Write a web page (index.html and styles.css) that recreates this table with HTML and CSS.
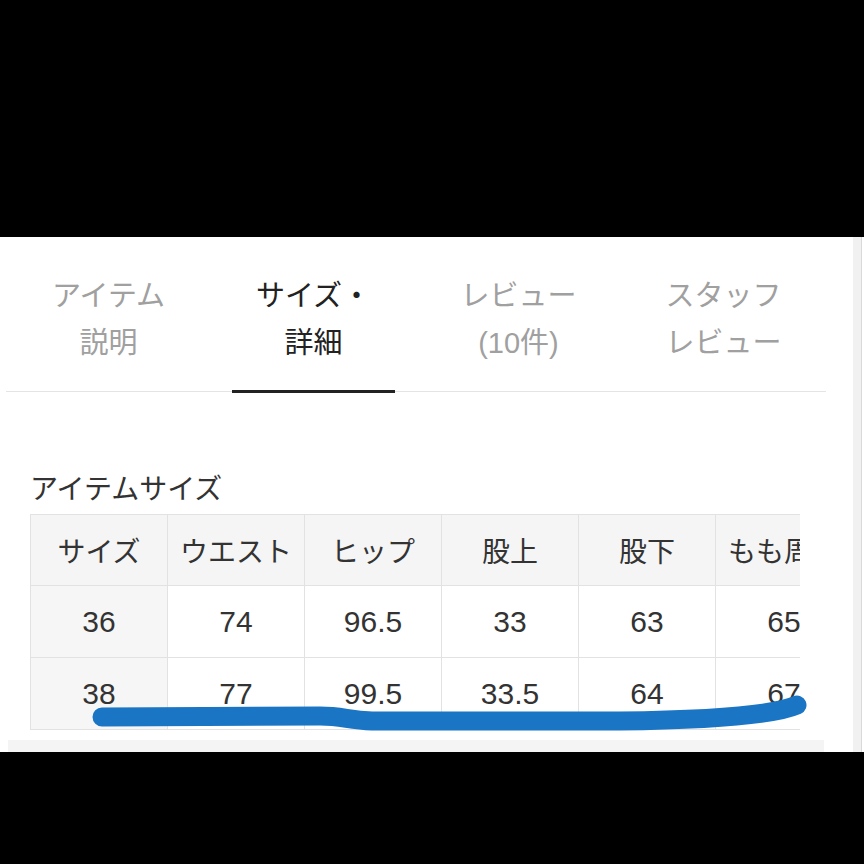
FILE: index.html
```html
<!DOCTYPE html>
<html lang="ja">
<head>
<meta charset="utf-8">
<title>サイズ・詳細</title>
<link rel="stylesheet" href="styles.css">
</head>
<body>
<div class="top-black"></div>
<main class="panel">
  <div class="panel-inner">
    <nav class="tabs">
      <div class="tab"><span>アイテム</span><span>説明</span></div>
      <div class="tab active"><span>サイズ・</span><span>詳細</span></div>
      <div class="tab"><span>レビュー</span><span>(10件)</span></div>
      <div class="tab"><span>スタッフ</span><span>レビュー</span></div>
    </nav>
    <section class="sizes">
      <h2 class="sizes-title">アイテムサイズ</h2>
      <div class="table-scroll">
        <table class="size-table">
          <tr class="head">
            <td>サイズ</td><td>ウエスト</td><td>ヒップ</td><td>股上</td><td>股下</td><td>もも周り</td>
          </tr>
          <tr class="row">
            <td class="first">36</td><td>74</td><td>96.5</td><td>33</td><td>63</td><td>65</td>
          </tr>
          <tr class="row">
            <td class="first">38</td><td>77</td><td>99.5</td><td>33.5</td><td>64</td><td>67</td>
          </tr>
        </table>
      </div>
    </section>
    <div class="bottom-strip"></div>
  </div>
  <div class="edge"></div>
</main>
<svg class="marker" width="864" height="864" viewBox="0 0 864 864" aria-hidden="true">
  <path d="M 102 717 L 320 716 C 342 716 348 720 372 721 L 620 721 C 700 720 772 716 797 705" fill="none" stroke="#1a75c4" stroke-width="19" stroke-linecap="round" stroke-linejoin="round"/>
</svg>
</body>
</html>
```

FILE: styles.css
```css
* { box-sizing: border-box; }

html, body {
  margin: 0;
  padding: 0;
  background: #000;
}

body {
  position: relative;
  width: 864px;
  height: 864px;
  overflow: hidden;
  font-family: "Liberation Sans", "Noto Sans CJK JP", sans-serif;
}

.top-black {
  height: 237px;
}

.panel {
  display: flex;
  height: 515px;
  background: #fff;
}

.panel-inner {
  width: 853px;
  display: flex;
  flex-direction: column;
}

.edge {
  width: 9px;
  background: #f1f1f1;
  border-right: 1px solid #d9d9d9;
}

.tabs {
  display: flex;
  margin-left: 6px;
  width: 820px;
  border-bottom: 1px solid #e4e4e4;
}

.tab {
  position: relative;
  flex: 1;
  display: flex;
  flex-direction: column;
  align-items: center;
  padding: 36px 0 24px;
  font-size: 29px;
  line-height: 47px;
  color: #a0a0a0;
}

.tab.active {
  color: #222;
}

.tab.active::after {
  content: "";
  position: absolute;
  left: 21px;
  right: 21px;
  bottom: -2px;
  height: 3px;
  background: #222;
}

.sizes {
  padding-left: 30px;
}

.sizes-title {
  margin: 78px 0 4px;
  font-size: 28px;
  line-height: 40px;
  font-weight: normal;
  color: #333;
}

.table-scroll {
  width: 770px;
  overflow: hidden;
}

.size-table {
  border-collapse: collapse;
  table-layout: fixed;
  width: 823px;
}

.size-table td {
  width: 137px;
  height: 71px;
  padding: 0;
  border: 1px solid #e2e2e2;
  text-align: center;
  white-space: nowrap;
  overflow: hidden;
  font-size: 30px;
  color: #333;
}

.size-table .row td {
  height: 72px;
}

.size-table .head td {
  background: #f5f5f5;
  font-size: 28px;
}

.size-table td.first {
  background: #f6f6f6;
}

.bottom-strip {
  margin: auto 0 0 8px;
  width: 816px;
  height: 12px;
  background: #f4f4f4;
}

.marker {
  position: absolute;
  top: 0;
  left: 0;
  pointer-events: none;
}
```
